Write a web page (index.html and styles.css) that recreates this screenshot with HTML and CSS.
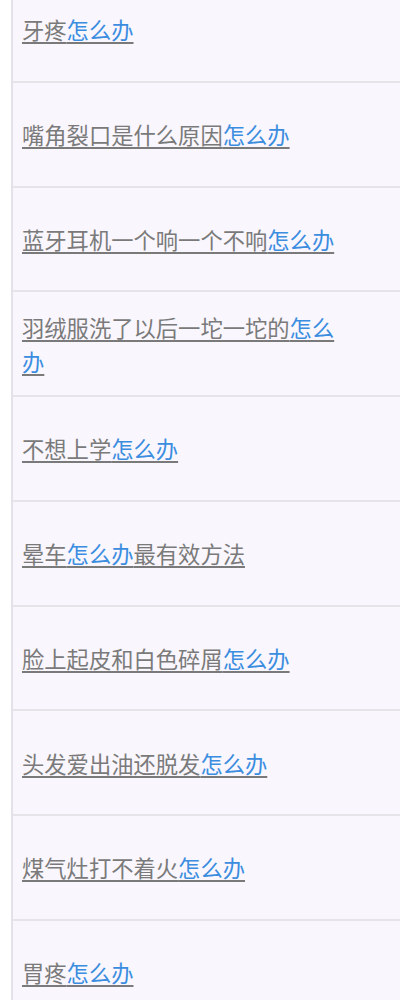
FILE: index.html
```html
<!DOCTYPE html>
<html>

<head>
    <meta charset="utf-8">
    <title>怎么办</title>
    <link rel="stylesheet" href="styles.css">
</head>

<body>
    <div class="list">
        <div class="item"><a href="#">牙疼<span class="key">怎么办</span></a></div>
        <div class="item"><a href="#">嘴角裂口是什么原因<span class="key">怎么办</span></a></div>
        <div class="item"><a href="#">蓝牙耳机一个响一个不响<span class="key">怎么办</span></a></div>
        <div class="item"><a href="#">羽绒服洗了以后一坨一坨的<span class="key">怎么办</span></a></div>
        <div class="item"><a href="#">不想上学<span class="key">怎么办</span></a></div>
        <div class="item"><a href="#">晕车<span class="key">怎么办</span>最有效方法</a></div>
        <div class="item"><a href="#">脸上起皮和白色碎屑<span class="key">怎么办</span></a></div>
        <div class="item"><a href="#">头发爱出油还脱发<span class="key">怎么办</span></a></div>
        <div class="item"><a href="#">煤气灶打不着火<span class="key">怎么办</span></a></div>
        <div class="item"><a href="#">胃疼<span class="key">怎么办</span></a></div>
    </div>
</body>

</html>
```

FILE: styles.css
```css
body {
    margin: 0;
    background: #ffffff;
    font-family: "Noto Sans CJK SC", "Noto Sans", sans-serif;
    overflow: hidden;
}

.list {
    margin-left: 11px;
    margin-top: -22px;
    border-left: 2px solid #e4e2e8;
    background: #f9f6fd;
}

.item {
    height: 102.75px;
    border-bottom: 2px solid #e6e4e8;
    display: flex;
    align-items: center;
    padding: 0 56px 0 9px;
}

.item a {
    font-size: 22.3px;
    line-height: 34px;
    color: #7a7a7a;
    text-decoration: underline;
    text-underline-offset: 3px;
}

.item .key {
    color: #3b8de0;
}
```
